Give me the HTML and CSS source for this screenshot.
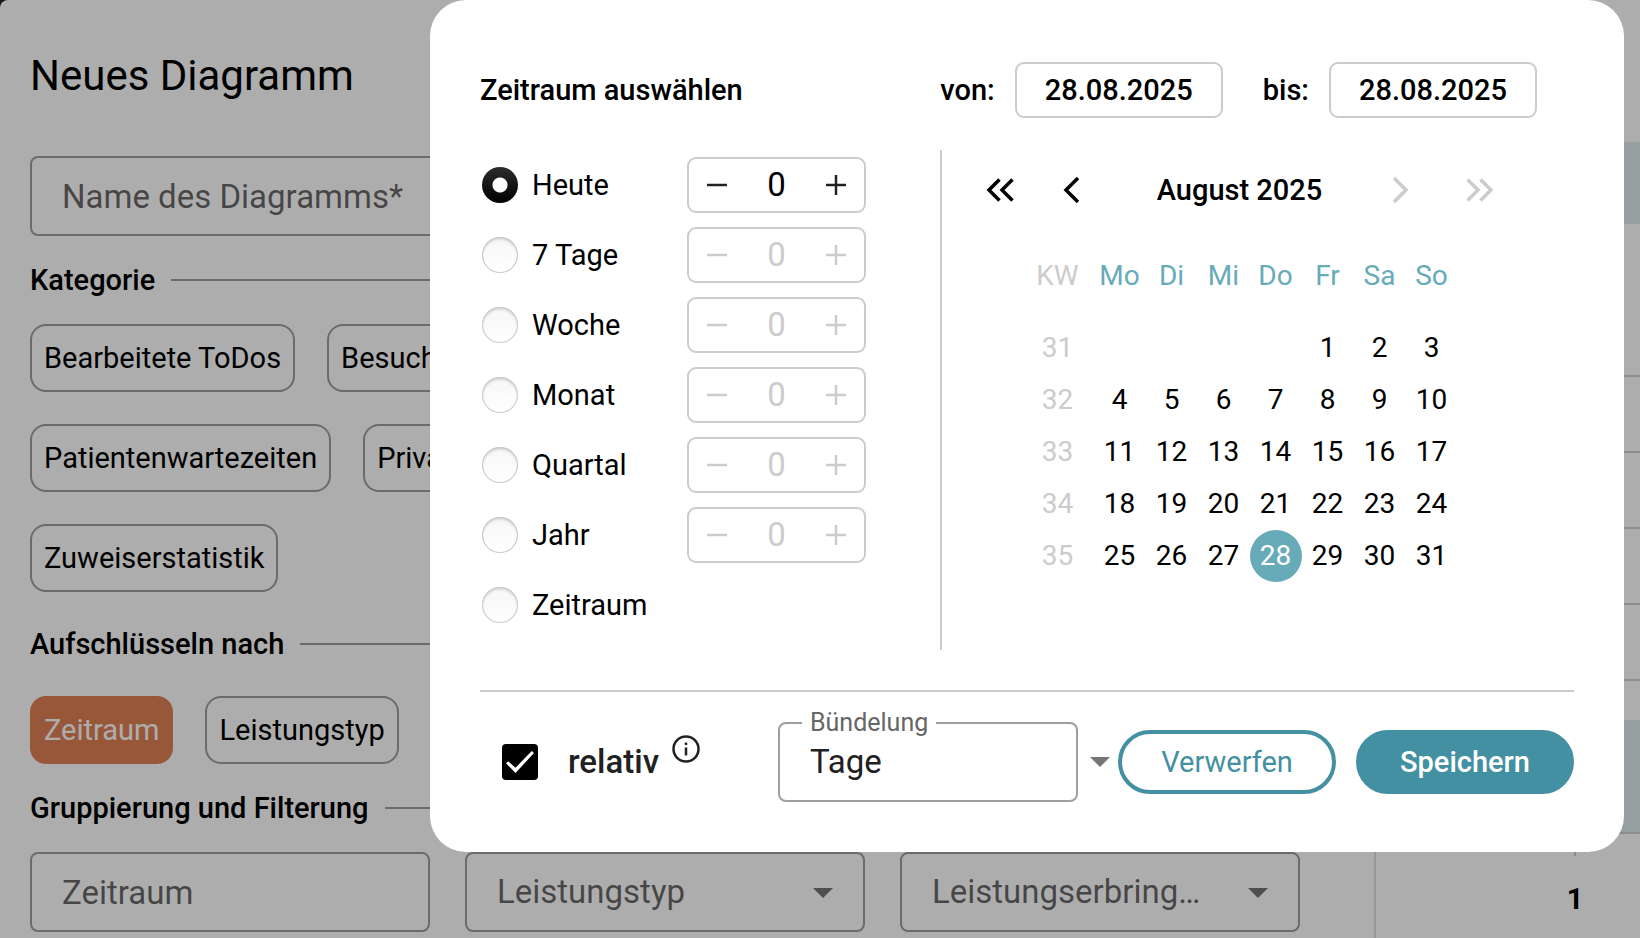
FILE: index.html
```html
<!DOCTYPE html>
<html lang="de">
<head>
<meta charset="utf-8">
<title>Neues Diagramm</title>
<link rel="stylesheet" href="styles.css">
</head>
<body>
<div class="page">
  <main class="editor">
    <h1 class="title">Neues Diagramm</h1>
    <input class="field name-field" type="text" placeholder="Name des Diagramms*" aria-label="Name des Diagramms">

    <h2 class="section">Kategorie</h2>
    <div class="chip-rows">
      <div class="chips">
        <button class="chip" type="button">Bearbeitete ToDos</button>
        <button class="chip" type="button">Besuche</button>
      </div>
      <div class="chips">
        <button class="chip" type="button">Patientenwartezeiten</button>
        <button class="chip" type="button">Privat</button>
      </div>
      <div class="chips">
        <button class="chip" type="button">Zuweiserstatistik</button>
      </div>
    </div>

    <h2 class="section section-wide">Aufschlüsseln nach</h2>
    <div class="chip-rows">
      <div class="chips">
        <button class="chip chip-active" type="button">Zeitraum</button>
        <button class="chip" type="button">Leistungstyp</button>
      </div>
    </div>

    <h2 class="section">Gruppierung und Filterung</h2>
    <div class="filters">
      <input class="field" type="text" placeholder="Zeitraum" aria-label="Zeitraum">
      <div class="select-wrap">
        <select class="field" aria-label="Leistungstyp"><option>Leistungstyp</option></select>
        <svg class="caret" viewBox="0 0 20 10"><path d="M0 0h20L10 10z"/></svg>
      </div>
      <div class="select-wrap">
        <select class="field" aria-label="Leistungserbringer"><option>Leistungserbring…</option></select>
        <svg class="caret" viewBox="0 0 20 10"><path d="M0 0h20L10 10z"/></svg>
      </div>
    </div>
  </main>
  <aside class="preview">
    <div class="band band-head"></div>
    <div class="rows">
      <div class="row row-first"></div>
      <div class="row"></div>
      <div class="row"></div>
      <div class="row"></div>
      <div class="row"></div>
    </div>
    <div class="band band-foot"></div>
    <div class="axis"><span class="tick"></span><span class="axis-label">1</span></div>
  </aside>
</div>

<div class="backdrop">
  <form class="dialog" role="dialog" aria-label="Zeitraum auswählen">
    <header class="head">
      <h2 class="head-title">Zeitraum auswählen</h2>
      <div class="range">
        <label class="range-item">von: <input class="date" type="text" value="28.08.2025"></label>
        <label class="range-item">bis: <input class="date" type="text" value="28.08.2025"></label>
      </div>
    </header>

    <div class="body">
      <div class="periods">
        <div class="period">
          <label class="choice"><input class="radio" type="radio" name="p" checked>Heute</label>
          <div class="stepper">
            <button class="step" type="button" aria-label="weniger"><svg class="sign" viewBox="0 0 20 20"><path d="M0 10h20"/></svg></button>
            <input class="count" type="text" value="0" aria-label="Anzahl Heute">
            <button class="step" type="button" aria-label="mehr"><svg class="sign" viewBox="0 0 20 20"><path d="M0 10h20M10 0v20"/></svg></button>
          </div>
        </div>
        <div class="period">
          <label class="choice"><input class="radio" type="radio" name="p">7 Tage</label>
          <div class="stepper off">
            <button class="step" type="button" aria-label="weniger" disabled><svg class="sign" viewBox="0 0 20 20"><path d="M0 10h20"/></svg></button>
            <input class="count" type="text" value="0" aria-label="Anzahl 7 Tage" disabled>
            <button class="step" type="button" aria-label="mehr" disabled><svg class="sign" viewBox="0 0 20 20"><path d="M0 10h20M10 0v20"/></svg></button>
          </div>
        </div>
        <div class="period">
          <label class="choice"><input class="radio" type="radio" name="p">Woche</label>
          <div class="stepper off">
            <button class="step" type="button" aria-label="weniger" disabled><svg class="sign" viewBox="0 0 20 20"><path d="M0 10h20"/></svg></button>
            <input class="count" type="text" value="0" aria-label="Anzahl Woche" disabled>
            <button class="step" type="button" aria-label="mehr" disabled><svg class="sign" viewBox="0 0 20 20"><path d="M0 10h20M10 0v20"/></svg></button>
          </div>
        </div>
        <div class="period">
          <label class="choice"><input class="radio" type="radio" name="p">Monat</label>
          <div class="stepper off">
            <button class="step" type="button" aria-label="weniger" disabled><svg class="sign" viewBox="0 0 20 20"><path d="M0 10h20"/></svg></button>
            <input class="count" type="text" value="0" aria-label="Anzahl Monat" disabled>
            <button class="step" type="button" aria-label="mehr" disabled><svg class="sign" viewBox="0 0 20 20"><path d="M0 10h20M10 0v20"/></svg></button>
          </div>
        </div>
        <div class="period">
          <label class="choice"><input class="radio" type="radio" name="p">Quartal</label>
          <div class="stepper off">
            <button class="step" type="button" aria-label="weniger" disabled><svg class="sign" viewBox="0 0 20 20"><path d="M0 10h20"/></svg></button>
            <input class="count" type="text" value="0" aria-label="Anzahl Quartal" disabled>
            <button class="step" type="button" aria-label="mehr" disabled><svg class="sign" viewBox="0 0 20 20"><path d="M0 10h20M10 0v20"/></svg></button>
          </div>
        </div>
        <div class="period">
          <label class="choice"><input class="radio" type="radio" name="p">Jahr</label>
          <div class="stepper off">
            <button class="step" type="button" aria-label="weniger" disabled><svg class="sign" viewBox="0 0 20 20"><path d="M0 10h20"/></svg></button>
            <input class="count" type="text" value="0" aria-label="Anzahl Jahr" disabled>
            <button class="step" type="button" aria-label="mehr" disabled><svg class="sign" viewBox="0 0 20 20"><path d="M0 10h20M10 0v20"/></svg></button>
          </div>
        </div>
        <div class="period">
          <label class="choice"><input class="radio" type="radio" name="p">Zeitraum</label>
        </div>
      </div>

      <div class="calendar">
        <div class="nav">
          <button class="nav-btn" type="button" aria-label="Vorheriges Jahr"><svg class="double" viewBox="0 0 28 28"><path d="M13.500 3.500L3 14l10.500 10.500M26.500 3.500L16 14l10.500 10.500"/></svg></button>
          <button class="nav-btn" type="button" aria-label="Vorheriger Monat"><svg class="single" viewBox="0 0 16 28"><path d="M15 2L3 14l12 12"/></svg></button>
          <span class="month">August 2025</span>
          <button class="nav-btn" type="button" aria-label="Nächster Monat" disabled><svg class="single" viewBox="0 0 16 28"><path d="M1 2l12 12L1 26"/></svg></button>
          <button class="nav-btn" type="button" aria-label="Nächstes Jahr" disabled><svg class="double" viewBox="0 0 28 28"><path d="M1.500 3.500L12 14 1.500 24.500M14.500 3.500L25 14 14.500 24.500"/></svg></button>
        </div>
        <table class="days">
          <thead>
            <tr><th class="week">KW</th><th>Mo</th><th>Di</th><th>Mi</th><th>Do</th><th>Fr</th><th>Sa</th><th>So</th></tr>
          </thead>
          <tbody>
            <tr><td class="week">31</td><td></td><td></td><td></td><td></td><td>1</td><td>2</td><td>3</td></tr>
            <tr><td class="week">32</td><td>4</td><td>5</td><td>6</td><td>7</td><td>8</td><td>9</td><td>10</td></tr>
            <tr><td class="week">33</td><td>11</td><td>12</td><td>13</td><td>14</td><td>15</td><td>16</td><td>17</td></tr>
            <tr><td class="week">34</td><td>18</td><td>19</td><td>20</td><td>21</td><td>22</td><td>23</td><td>24</td></tr>
            <tr><td class="week">35</td><td>25</td><td>26</td><td>27</td><td class="today">28</td><td>29</td><td>30</td><td>31</td></tr>
          </tbody>
        </table>
      </div>
    </div>

    <footer class="foot">
      <label class="relative"><input class="check" type="checkbox" checked>relativ</label>
      <svg class="info" viewBox="0 0 28 28"><circle cx="14" cy="14" r="12.500"/><path d="M14 12.500v8M14 7.500v2.500"/></svg>
      <div class="bundle">
        <label class="bundle-label" for="bundle">Bündelung</label>
        <select class="bundle-select" id="bundle"><option>Tage</option></select>
      </div>
      <svg class="caret" viewBox="0 0 20 10"><path d="M0 0h20L10 10z"/></svg>
      <button class="btn btn-outline" type="button">Verwerfen</button>
      <button class="btn btn-solid" type="submit">Speichern</button>
    </footer>
  </form>
</div>
</body>
</html>
```
FILE: styles.css
```css
*, *::before, *::after { box-sizing: border-box; }

body {
  margin: 0;
  background: #222;
  color: #000;
  font: 400 29px/34px Roboto, "Liberation Sans", sans-serif;
}

button, input, select { font: inherit; color: inherit; margin: 0; }
button { cursor: pointer; }
h1, h2 { margin: 0; }

.page {
  display: flex;
  min-height: 100vh;
  background: #fff;
  border-top-left-radius: 8px;
}

.editor {
  flex: 1;
  min-width: 0;
  padding: 51px 74px 6px 30px;
}

.title { font-size: 42px; line-height: 50px; font-weight: 400; }

.field {
  display: block;
  width: 100%;
  height: 80px;
  padding: 0 30px;
  border: 2px solid rgba(0, 0, 0, .38);
  border-radius: 8px;
  background: transparent;
  color: rgba(0, 0, 0, .6);
  font-size: 33px;
  line-height: 40px;
  appearance: none;
}
.field::placeholder { color: rgba(0, 0, 0, .6); opacity: 1; }
.name-field { margin-top: 55px; }

.section {
  display: flex;
  align-items: center;
  gap: 16px;
  margin: 27px 0;
  font-size: 29px;
  font-weight: 500;
}
.section::after {
  content: "";
  flex: 1;
  height: 2px;
  background: rgba(0, 0, 0, .38);
}
.section-wide { margin: 35px 0; }

.chip-rows { display: grid; gap: 32px; }
.chips { display: flex; gap: 32px; }
.chip {
  height: 68px;
  padding: 0 12px;
  border: 2px solid rgba(0, 0, 0, .38);
  border-radius: 16px;
  background: transparent;
}
.chip-active { border-color: #e28055; background: #e28055; color: #fff; }

.filters { display: grid; grid-template-columns: repeat(3, 1fr); gap: 35px; }
.select-wrap { position: relative; }
.caret { width: 20px; height: 10px; fill: rgba(0, 0, 0, .54); flex: none; }
.select-wrap .caret { position: absolute; right: 32px; top: 36px; pointer-events: none; }

.preview {
  width: 266px;
  padding-top: 142px;
  border-left: 2px solid rgba(0, 0, 0, .12);
}
.band { background: #e0edef; }
.band-head { height: 82px; }
.band-foot { height: 114px; border-bottom: 2px solid #d0d0d0; }
.row { height: 76px; border-bottom: 2px solid #d0d0d0; }
.row-first { height: 153px; }
.rows { padding-bottom: 39px; }
.axis { display: flex; flex-direction: column; align-items: center; gap: 26px; padding-left: 134px; }
.tick { width: 2px; height: 22px; background: #d0d0d0; }
.axis-label { font-weight: 700; }

.backdrop {
  position: fixed;
  inset: 0;
  background: rgba(0, 0, 0, .32);
}

.dialog {
  margin: 0 16px 0 430px;
  padding: 62px 50px 50px;
  border-radius: 36px;
  background: #fff;
}

.head {
  display: flex;
  align-items: center;
  justify-content: space-between;
  margin: 0 37px 32px 0;
  font-weight: 500;
}
.head-title { font-size: 29px; font-weight: 500; }
.range { display: flex; gap: 40px; }
.range-item { display: flex; align-items: center; gap: 20px; }
.date {
  width: 208px;
  height: 56px;
  padding: 0;
  border: 2px solid #ccc;
  border-radius: 9px;
  background: #fff;
  text-align: center;
}

.body {
  display: grid;
  grid-template-columns: 460px 1fr;
  min-height: 500px;
  margin-right: 37px;
}

.periods { display: flex; flex-direction: column; gap: 14px; padding-top: 7px; }
.period { display: flex; align-items: center; height: 56px; }
.choice { display: flex; align-items: center; gap: 14px; width: 207px; padding-left: 2px; }

.radio {
  flex: none;
  width: 36px;
  height: 36px;
  border-radius: 50%;
  appearance: none;
  background: linear-gradient(#f6f6f6, #fff);
  box-shadow: inset 0 0 0 1px #ccc, inset 0 2px 3px rgba(0, 0, 0, .2);
}
.radio:checked {
  background: radial-gradient(circle, #fff 7px, transparent 8px), linear-gradient(#2c2c2c, #000);
  box-shadow: none;
}

.stepper {
  display: flex;
  align-items: center;
  width: 179px;
  height: 56px;
  border: 2px solid #ccc;
  border-radius: 9px;
}
.step {
  display: flex;
  align-items: center;
  justify-content: center;
  width: 56px;
  height: 100%;
  padding: 0;
  border: 0;
  background: none;
}
.sign { width: 20px; height: 20px; fill: none; stroke: #222; stroke-width: 2.500; }
.count {
  flex: 1;
  min-width: 0;
  padding: 0;
  border: 0;
  background: none;
  font-size: 33px;
  text-align: center;
}
.off .count { color: #ccc; }
.off .sign { stroke: #ccc; }

.calendar {
  display: flex;
  flex-direction: column;
  align-items: center;
  border-left: 2px solid #ccc;
}
.nav {
  display: grid;
  grid-template-columns: 28px 24px 1fr 24px 28px;
  gap: 49px;
  align-items: center;
  width: 508px;
  height: 80px;
}
.nav-btn {
  display: flex;
  padding: 0;
  border: 0;
  background: none;
  color: #000;
}
.nav-btn:disabled { color: #ccc; }
.double, .single { flex: none; height: 28px; fill: none; stroke: currentColor; stroke-width: 3.500; }
.double { width: 28px; }
.single { width: 16px; }
.month { display: flex; justify-content: center; font-weight: 500; white-space: nowrap; }

.days { border-collapse: collapse; font-size: 28px; text-align: center; }
.days th { width: 52px; height: 92px; padding: 0; color: #67abb9; font-weight: 400; }
.days td { width: 52px; height: 52px; padding: 0; }
.days .week { width: 72px; color: #ccc; }
.days .today { border-radius: 50%; background: #67abb9; color: #fff; }

.foot {
  display: flex;
  align-items: center;
  padding-top: 30px;
  margin-top: 40px;
  border-top: 2px solid #ccc;
}
.relative {
  display: flex;
  align-items: center;
  gap: 30px;
  padding-left: 22px;
  color: #212121;
  font-size: 33px;
  font-weight: 500;
}
.check {
  display: grid;
  place-items: center;
  width: 36px;
  height: 36px;
  border-radius: 4px;
  background: #000;
  appearance: none;
}
.check:checked::before {
  content: "";
  width: 28px;
  height: 22px;
  background: #fff;
  clip-path: polygon(0 56%, 8% 47%, 34% 76%, 92% 0, 100% 9%, 34% 100%);
}
.info {
  width: 28px;
  height: 28px;
  margin: 0 auto 26px 13px;
  fill: none;
  stroke: #212121;
  stroke-width: 2.500;
}

.bundle { position: relative; width: 300px; margin-right: 12px; }
.bundle-label {
  position: absolute;
  left: 24px;
  top: -14px;
  padding: 0 8px;
  background: #fff;
  color: #666;
  font-size: 25px;
  line-height: 30px;
}
.bundle-select {
  display: block;
  width: 100%;
  height: 80px;
  padding: 0 30px;
  border: 2px solid #9e9e9e;
  border-radius: 8px;
  background: transparent;
  color: #212121;
  font-size: 33px;
  line-height: 40px;
  appearance: none;
}

.btn {
  width: 218px;
  height: 64px;
  padding: 0;
  border: 4px solid #4490a3;
  border-radius: 32px;
}
.btn-outline { margin: 0 20px 0 8px; background: #fff; color: #4490a3; }
.btn-solid { background: #4490a3; color: #fff; font-weight: 500; }
```
